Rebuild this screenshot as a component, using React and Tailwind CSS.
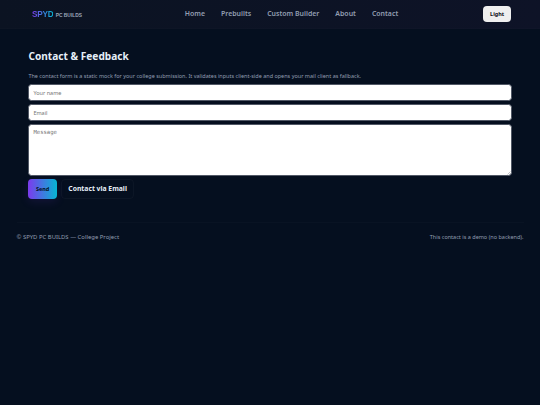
const navLinks = ['Home', 'Prebuilts', 'Custom Builder', 'About', 'Contact'];

function Header() {
  return (
    <header className="flex h-[28.5px] items-start border-b border-white/[0.01] bg-linear-to-r from-[#0b1322] to-[#0e1327] pr-[28.6px] pl-[32px]">
      <div className="flex w-[152.8px] items-baseline gap-[2.4px] pt-[8px] leading-[13px] whitespace-nowrap">
        <span className="bg-[linear-gradient(90deg,#7c3aed,#06b6d4)] bg-clip-text font-['Liberation_Sans',sans-serif] text-[8.2px] font-bold tracking-[-0.25px] text-transparent">
          SPYD
        </span>
        <span className="font-['Liberation_Sans',sans-serif] text-[4.9px] font-bold text-[#9aa6b8]">PC BUILDS</span>
      </div>
      <nav className="flex gap-[16px] pt-[8px] text-[6.95px] leading-[11px] font-semibold whitespace-nowrap text-[#929eb1]">
        {navLinks.map((link) => (
          <a key={link} href="#">{link}</a>
        ))}
      </nav>
      <div className="flex flex-1 justify-end pt-[6px]">
        <button className="h-[16px] w-[28.5px] rounded-[4px] bg-[#efefef] text-[5.5px] leading-[16px] font-bold text-[#0b0b12]">
          Light
        </button>
      </div>
    </header>
  );
}

function ContactForm() {
  return (
    <form className="flex flex-col" onSubmit={(e) => e.preventDefault()}>
      <input
        type="text"
        placeholder="Your name"
        className="h-[16.5px] rounded-[3.5px] border-[0.5px] border-[#515866] bg-white px-[4px] pt-[1px] text-[5.5px] text-black placeholder:text-[#757575]"
      />
      <input
        type="email"
        placeholder="Email"
        className="mt-[3.5px] h-[16.5px] rounded-[3.5px] border-[0.5px] border-[#515866] bg-white px-[4px] pt-[1px] text-[5.5px] text-black placeholder:text-[#757575]"
      />
      <div className="relative mt-[3.5px] flex">
        <textarea
          placeholder="Message"
          className="h-[51.5px] w-full resize-none rounded-[3.5px] border-[0.5px] border-[#515866] bg-white px-[4px] py-[3px] font-['DejaVu_Sans_Mono',monospace] text-[5.6px] leading-[8px] text-black placeholder:text-[#757575]"
        />
        {/* Resize grip */}
        <svg className="absolute right-[1px] bottom-[1px]" width="4" height="4" fill="none" stroke="#8b8f98" strokeWidth="0.5">
          <path d="M0.5 3.5l3-3M2.2 3.7l1.5-1.5" />
        </svg>
      </div>
      <div className="mt-[3.6px] flex gap-[4.5px]">
        <button className="h-[20px] w-[28.5px] rounded-[4px] bg-[linear-gradient(90deg,#7c3aed,#06b6d4)] text-[5.5px] font-bold text-[#021024] shadow-[0_3px_10px_rgba(124,58,237,0.12)]">
          Send
        </button>
        <a
          href="mailto:"
          className="flex h-[20px] w-[72.5px] items-center justify-center rounded-[4px] border border-white/[0.03] pb-[0.4px] text-[6.8px] font-bold whitespace-nowrap text-[#e6eef8]"
        >
          Contact via Email
        </a>
      </div>
    </form>
  );
}

export default function App() {
  return (
    <div className="h-[405px] w-[540px] overflow-hidden bg-[#050f1f] font-['Noto_Sans',sans-serif]">
      <Header />
      <main className="px-[28.4px] pt-[19px]">
        <h1 className="text-[10.15px] leading-[16px] font-bold text-[#e6eef8]">Contact &amp; Feedback</h1>
        <p className="mt-[7px] mb-[3.5px] text-[5.49px] leading-[10px] text-[#929eb1]">
          The contact form is a static mock for your college submission. It validates inputs client-side and opens your
          mail client as fallback.
        </p>
        <ContactForm />
      </main>
      <footer className="mx-[16.5px] mt-[22.5px] flex justify-between border-t border-white/[0.02] pt-[8.2px] leading-[12px] text-[#929eb1]">
        <span className="text-[5.92px]">© SPYD PC BUILDS — College Project</span>
        <span className="text-[5.5px]">This contact is a demo (no backend).</span>
      </footer>
    </div>
  );
}
